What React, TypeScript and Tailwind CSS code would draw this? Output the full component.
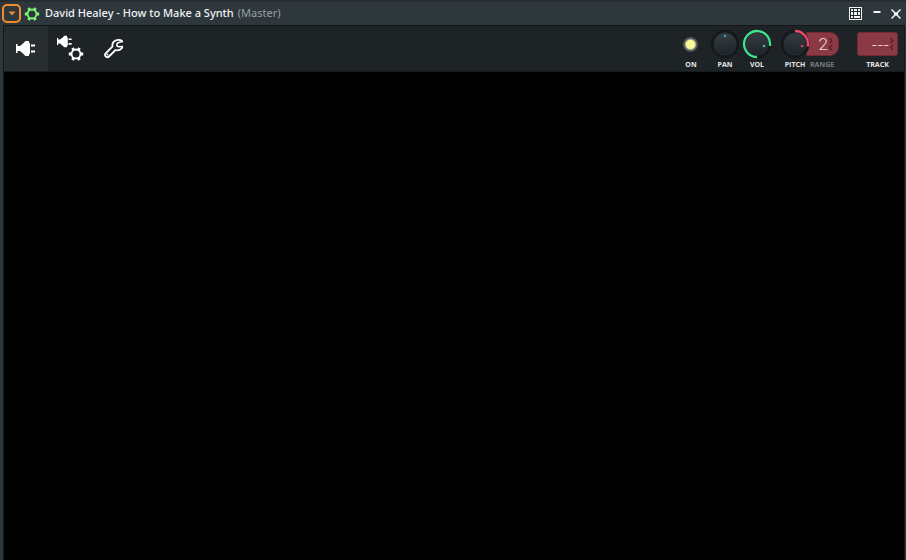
import React from "react"

type KnobProps = {
  label: string
  value: number
  arc?: string
  arcColor?: string
  dot: [number, number]
  dotColor: string
}

const labelStyle = "h-2 text-[7px] leading-2 font-bold text-[#e4e6e7]"

function Knob({ label, value, arc, arcColor, dot, dotColor }: KnobProps) {
  return (
    <label className="relative z-10 flex w-[30px] flex-col items-center">
      <svg viewBox="0 0 30 30" className="size-[30px] shrink-0">
        <circle cx="15" cy="15" r="14.5" fill="#171b1e" />
        <circle cx="15" cy="15" r="12.5" fill="#1b2023" stroke="#121618" />
        <circle cx="15" cy="15" r="11" fill={`url(#${label}-face)`} stroke="#2b3237" strokeWidth="0.6" />
        <defs>
          <linearGradient id={`${label}-face`} x1="0" y1="0" x2="0" y2="1">
            <stop offset="0" stopColor="#363d43" />
            <stop offset="1" stopColor="#1d2328" />
          </linearGradient>
        </defs>
        {arc && <path d={arc} fill="none" stroke={arcColor} strokeWidth="2.3" />}
        <circle cx={dot[0]} cy={dot[1]} r="1.3" fill={dotColor} />
      </svg>
      <span className={labelStyle + " mt-0.5"}>{label}</span>
      <input type="range" min="0" max="100" defaultValue={value} className="absolute inset-0 size-full cursor-pointer opacity-0" />
    </label>
  )
}

function Chevrons() {
  return (
    <svg viewBox="0 0 6 14" className="h-3.5 w-1.5 shrink-0" fill="none" stroke="#551c26" strokeWidth="1.2">
      <path d="M1.500 1 4 3.500 1.500 6M4 8 1.500 10.500 4 13" />
    </svg>
  )
}

function Plug() {
  return (
    <g>
      <path
        d="M0 4h1.500v2h2.500L7 3.500 9.500 1h3.500v1.500l1 1v10l-1 1V16H9.500L7 13.500 4 11H1.500v2H0z"
        fill="currentColor"
      />
      <path d="M15 5.500h4M15 11.500h4" stroke="currentColor" strokeWidth="2" />
    </g>
  )
}

function Gear() {
  return (
    <g fill="none" stroke="currentColor">
      <circle cx="7" cy="7" r="4.500" strokeWidth="1.900" />
      <path
        d="M11.500 7H14.200M2.500 7H-0.200M9.300 3.100 10.500 1M4.700 3.100 3.500 1M9.300 10.900 10.500 13M4.700 10.900 3.500 13"
        strokeWidth="2.800"
      />
    </g>
  )
}

function TitleBar() {
  return (
    <header className="flex h-[25px] shrink-0 items-center border-t-2 border-[#252d32] bg-[#2d373c] pr-[5px] pl-0.5">
      <button aria-label="Plugin menu" className="flex size-[19px] items-center justify-center rounded-[5px] border-2 border-[#f58a2c]">
        <svg viewBox="0 0 8 5" className="h-[5px] w-2 fill-[#f58a2c]">
          <path d="M0.500 0.500h7L4 4.500z" />
        </svg>
      </button>
      <svg viewBox="0 0 14 14" className="ml-[4px] size-3.5 overflow-visible text-[#83f273]">
        <Gear />
      </svg>
      <h1 className="ml-1.5 flex gap-1 text-[11px] font-medium whitespace-nowrap text-[#f0f2f3]">
        David Healey - How to Make a Synth <span className="font-normal text-[#98a0a3]">(Master)</span>
      </h1>
      <div className="ml-auto flex items-center text-[#f2f4f4]">
        <button aria-label="Detached keyboard">
          <svg viewBox="0 0 13 13" className="size-[13px]">
            <path d="M0 0h13v13H0z" fill="currentColor" />
            <path d="M1 1h11v11H1z" fill="#20282d" />
            <path
              d="M2 2h2v2H2zM5 2h3v2H5zM9 2h2v2H9zM2 5h2v3H2zM5 5h3v3H5zM9 5h2v3H9zM2 9h2v2H2zM5 9h6v2H5z"
              fill="currentColor"
            />
          </svg>
        </button>
        <button aria-label="Minimize" className="ml-[11px]">
          <svg viewBox="0 0 8 12" className="h-3 w-2">
            <path d="M0.500 3h7v2h-7z" fill="currentColor" />
          </svg>
        </button>
        <button aria-label="Close" className="ml-2.5">
          <svg viewBox="0 0 10 10" className="size-2.5" stroke="currentColor" strokeWidth="1.500">
            <path d="M0.500 0.500l9 9M9.500 0.500l-9 9" />
            <path d="M3 5h4" strokeWidth="3" />
          </svg>
        </button>
      </div>
    </header>
  )
}

function Toolbar() {
  const tab = "h-full w-11 text-white"

  return (
    <div className="flex h-[47px] shrink-0 justify-between border-t border-b border-t-[#14181a] border-b-[#171b1d] bg-[#1e2326]">
      <nav className="flex">
        <button aria-label="Plugin" className={tab + " bg-[#282d30]"}>
          <svg viewBox="0 0 44 44" className="size-11">
            <g transform="translate(12 13)">
              <Plug />
            </g>
          </svg>
        </button>
        <button aria-label="Plugin settings" className={tab}>
          <svg viewBox="0 0 44 44" className="size-11">
            <g transform="translate(9 8) scale(0.77)">
              <Plug />
            </g>
            <g transform="translate(21 20)">
              <Gear />
            </g>
          </svg>
        </button>
        <button aria-label="Tools" className={tab}>
          <svg viewBox="0 0 44 44" className="size-11" fill="none" stroke="currentColor" strokeWidth="1.800">
            <path d="M30.500 14C26 11.500 19.500 13.500 20.500 19.500L13.500 26.500C12 29 15 31.500 17 29.500L23.500 23C26.500 24 30 22.500 30.500 19.500" />
            <path d="M31 14.500L27.500 15.200C24 16 24 19.500 27 19.800L31 19.500" strokeWidth="1.500" />
            <path d="M15 28l1-1" />
          </svg>
        </button>
      </nav>

      <div className="flex pt-[3px] pr-1.5 font-['Open_Sans',sans-serif]">
        <label className="relative flex w-8 flex-col items-center">
          <svg viewBox="0 0 30 30" className="size-[30px] shrink-0">
            <circle cx="14.500" cy="15.500" r="7.500" fill="#50555a" />
            <circle cx="14.500" cy="15.500" r="5.800" fill="#a1a18b" />
            <circle cx="14.500" cy="15.500" r="4.700" fill="#f8f998" />
          </svg>
          <span className={labelStyle + " mt-0.5"}>ON</span>
          <input type="checkbox" defaultChecked className="absolute inset-0 size-full cursor-pointer opacity-0" />
        </label>
        <div className="ml-[3px] flex gap-0.5">
          <Knob label="PAN" value={50} dot={[15, 7]} dotColor="#3f9ab5" />
          <Knob
            label="VOL"
            value={78}
            arc="M15 28A13 13 0 1 1 27.900 17"
            arcColor="#42e28d"
            dot={[22, 17]}
            dotColor="#3fbf80"
          />
        </div>
        <div className="ml-2 flex">
          <Knob
            label="PITCH"
            value={50}
            arc="M15 2A13 13 0 0 1 27.800 17.500"
            arcColor="#ef4a6c"
            dot={[22, 17]}
            dotColor="#d84560"
          />
          <label className="-ml-1 flex flex-col pt-[3px]">
            <span className="flex h-6 w-[33px] items-center rounded-r-[9px] border border-[#702a34] bg-[#8b3a45] pr-1">
              <input
                defaultValue="2"
                className="w-full min-w-0 bg-transparent text-right font-[Roboto,sans-serif] text-[17px] leading-6 font-light text-[#f3dfe2] outline-none"
              />
              <Chevrons />
            </span>
            <span className="mt-[5px] ml-1 h-2 text-[7px] leading-2 font-bold text-[#777c80]">RANGE</span>
          </label>
        </div>
        <label className="ml-[18px] flex flex-col items-center pt-[3px]">
          <span className="flex h-6 w-[41px] items-center rounded-[3px] border border-[#702a34] bg-[#8b3a45] pr-0.5">
            <input
              defaultValue="---"
              className="w-full min-w-0 bg-transparent text-right text-[18px] leading-6 font-light text-[#f3dfe2] outline-none"
            />
            <Chevrons />
          </span>
          <span className={labelStyle + " mt-[5px]"}>TRACK</span>
        </label>
      </div>
    </div>
  )
}

export default function App() {
  return (
    <div className="flex min-h-screen flex-col bg-[#2d373c] font-['Noto_Sans','Open_Sans',sans-serif]">
      <TitleBar />
      <div className="mr-px ml-[3px] flex grow flex-col border-x border-[#14181a]">
        <Toolbar />
        <main className="grow bg-black" />
      </div>
    </div>
  )
}
